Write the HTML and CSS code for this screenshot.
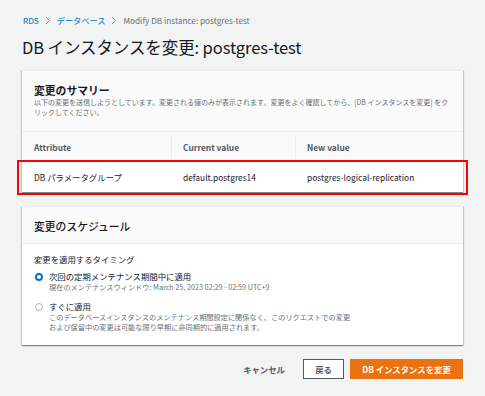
FILE: index.html
```html
<!DOCTYPE html>
<html lang="ja">
<head>
<meta charset="utf-8">
<link rel="stylesheet" href="styles.css">
</head>
<body>
<nav class="crumbs">
  <a class="crumb-link">RDS</a>
  <svg class="chev" width="6" height="9" viewBox="0 0 6 9"><path d="M1 1l3.5 3.5L1 8" fill="none" stroke="#879596" stroke-width="1"/></svg>
  <a class="crumb-link">データベース</a>
  <svg class="chev" width="6" height="9" viewBox="0 0 6 9"><path d="M1 1l3.5 3.5L1 8" fill="none" stroke="#879596" stroke-width="1"/></svg>
  <span class="crumb-current">Modify DB instance: postgres-test</span>
</nav>
<h1 class="title">DB インスタンスを変更: postgres-test</h1>

<section class="card summary">
  <div class="card-head">
    <h2 class="card-title bold">変更のサマリー</h2>
    <p class="card-desc">以下の変更を送信しようとしています。変更される値のみが表示されます。変更をよく確認してから、[DB インスタンスを変更] をクリックしてください。</p>
  </div>
  <div class="table">
    <div class="trow thead">
      <div class="cell">Attribute</div>
      <div class="cell sep">Current value</div>
      <div class="cell sep">New value</div>
    </div>
    <div class="trow tbody">
      <div class="cell">DB パラメータグループ</div>
      <div class="cell">default.postgres14</div>
      <div class="cell">postgres-logical-replication</div>
      <div class="highlight"></div>
    </div>
  </div>
</section>

<section class="card schedule">
  <div class="card-head sched-head">
    <h2 class="card-title medium">変更のスケジュール</h2>
  </div>
  <div class="card-body">
    <div class="field-label">変更を適用するタイミング</div>
    <div class="radio-row first">
      <span class="radio checked"></span>
      <div>
        <div class="radio-label">次回の定期メンテナンス期間中に適用</div>
        <div class="radio-desc">現在のメンテナンスウィンドウ: March 25, 2023 02:29 - 02:59 UTC+9</div>
      </div>
    </div>
    <div class="radio-row second">
      <span class="radio"></span>
      <div>
        <div class="radio-label">すぐに適用</div>
        <div class="radio-desc">このデータベースインスタンスのメンテナンス期間設定に関係なく、このリクエストでの変更<br>および保留中の変更は可能な限り早期に非同期的に適用されます。</div>
      </div>
    </div>
  </div>
</section>

<div class="actions">
  <span class="btn-link">キャンセル</span>
  <span class="btn btn-normal">戻る</span>
  <span class="btn btn-primary">DB インスタンスを変更</span>
</div>
</body>
</html>
```

FILE: styles.css
```css
* { box-sizing: border-box; }
html, body { margin: 0; }
body {
  background: #f2f3f3;
  font-family: "Noto Sans CJK JP", "Noto Sans", sans-serif;
  color: #16191f;
  padding: 12px 22px 0 22px;
  width: 485px;
  height: 396px;
  overflow: hidden;
}
.crumbs {
  display: flex;
  align-items: center;
  gap: 6px;
  height: 16px;
  font-size: 8.2px;
  padding-left: 1px;
}
.crumb-link { color: #0073bb; }
.crumb-current { color: #687078; }
.chev { display: block; }
.title {
  margin: 7px 0 0 0;
  font-size: 16.5px;
  line-height: 24px;
  font-weight: 400;
  letter-spacing: -0.1px;
}
.card {
  background: #fafafa;
  border-top: 1px solid #eaeded;
  box-shadow: 0 1px 1px 0 rgba(0,28,36,.3), 1px 1px 1px 0 rgba(0,28,36,.15), -1px 1px 1px 0 rgba(0,28,36,.15);
}
.summary { margin-top: 11px; }
.card-head {
  padding: 12px 12px 14px 12px;
  border-bottom: 1px solid #eaeded;
}
.card-title {
  margin: 0;
  font-size: 10.8px;
  line-height: 14px;
  font-weight: 400;
}
.card-title.bold { font-weight: 700; }
.card-title.medium { font-weight: 500; }
.card-desc {
  margin: 0;
  font-size: 7px;
  line-height: 10px;
  color: #687078;
}
.table { position: relative; }
.trow {
  display: grid;
  grid-template-columns: 149px 124px 1fr;
  position: relative;
}
.thead {
  height: 30px;
  align-items: center;
  border-bottom: 1px solid #eaeded;
  font-weight: 700;
  color: #545b64;
  font-size: 8.4px;
}
.tbody {
  height: 30px;
  align-items: center;
  background: #fff;
  font-size: 8.4px;
}
.cell { padding-left: 12px; position: relative; }
.sep::before {
  content: "";
  position: absolute;
  left: 0;
  top: -6px;
  bottom: -6px;
  border-left: 1px solid #eaeded;
}
.highlight {
  position: absolute;
  left: -5px;
  right: -5px;
  top: -2px;
  bottom: -3px;
  border: 2.5px solid #f00;
  pointer-events: none;
}
.schedule { margin-top: 14px; }
.sched-head { padding: 12px 12px 10px 12px; }
.card-body {
  background: #fff;
  padding: 9px 12px 13px 12px;
}
.field-label {
  font-size: 8.4px;
  line-height: 12px;
}
.radio-row {
  display: flex;
  align-items: flex-start;
  gap: 6px;
}
.radio-row.first { margin-top: 5px; }
.radio-row.second { margin-top: 8px; }
.radio {
  flex: none;
  width: 8px;
  height: 8px;
  margin-top: 2.5px;
  margin-left: 1px;
  border-radius: 50%;
  border: 1px solid #aab7b8;
  background: #fff;
}
.radio.checked { border: 2.5px solid #0073bb; }
.radio-label {
  font-size: 8.4px;
  line-height: 12px;
}
.radio-desc {
  font-size: 7.2px;
  line-height: 10px;
  color: #687078;
}
.actions {
  display: flex;
  justify-content: flex-end;
  align-items: center;
  margin-top: 14px;
  font-size: 8.4px;
}
.btn-link {
  font-weight: 700;
  color: #545b64;
  margin-right: 18px;
}
.btn {
  display: flex;
  align-items: center;
  justify-content: center;
  height: 20px;
  font-weight: 700;
}
.btn-normal {
  width: 41px;
  border: 1px solid #545b64;
  background: #fff;
  color: #545b64;
  margin-right: 6px;
}
.btn-primary {
  width: 113px;
  background: #ec7211;
  color: #fff;
}
```
